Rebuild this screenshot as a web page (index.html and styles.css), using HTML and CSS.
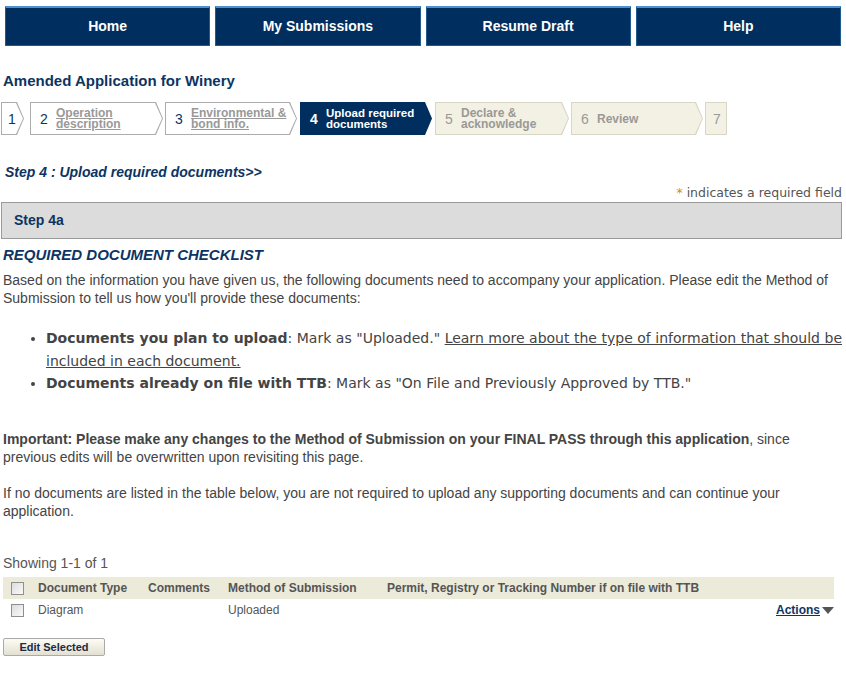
FILE: index.html
```html
<!DOCTYPE html>
<html>
<head>
    <title>Amended Application for Winery</title>
    <link rel="stylesheet" href="styles.css">
</head>
<body>
    <div class="nav">
        <a class="nav-btn" href="#">Home</a>
        <a class="nav-btn" href="#">My Submissions</a>
        <a class="nav-btn" href="#">Resume Draft</a>
        <a class="nav-btn" href="#">Help</a>
    </div>

    <div class="page">
        <h1 class="app-title">Amended Application for Winery</h1>

        <div class="stepper">
            <div class="step done s1"><div class="step-in"><span class="num">1</span></div></div>
            <div class="step done s2"><div class="step-in"><span class="num">2</span><a class="label" href="#">Operation<br>description</a></div></div>
            <div class="step done s3"><div class="step-in"><span class="num">3</span><a class="label" href="#">Environmental &amp;<br>bond info.</a></div></div>
            <div class="step active s4"><div class="step-in"><span class="num">4</span><span class="label">Upload required<br>documents</span></div></div>
            <div class="step todo s5"><div class="step-in"><span class="num">5</span><span class="label">Declare &amp;<br>acknowledge</span></div></div>
            <div class="step todo s6"><div class="step-in"><span class="num">6</span><span class="label">Review</span></div></div>
            <div class="step todo s7"><div class="step-in"><span class="num">7</span></div></div>
        </div>

        <h2 class="step-heading">Step 4 : Upload required documents&gt;&gt;</h2>

        <div class="required-note"><span class="star">*</span> indicates a required field</div>

        <div class="section-bar">Step 4a</div>

        <h3 class="checklist-title">REQUIRED DOCUMENT CHECKLIST</h3>
        <p class="text">Based on the information you have given us, the following documents need to accompany your application. Please edit the Method of Submission to tell us how you'll provide these documents:</p>

        <ul class="doc-list">
            <li><b>Documents you plan to upload</b>: Mark as "Uploaded." <a href="#">Learn more about the type of information that should be included in each document.</a></li>
            <li><b>Documents already on file with TTB</b>: Mark as "On File and Previously Approved by TTB."</li>
        </ul>

        <p class="text important"><b>Important: Please make any changes to the Method of Submission on your FINAL PASS through this application</b>, since previous edits will be overwritten upon revisiting this page.</p>
        <p class="text">If no documents are listed in the table below, you are not required to upload any supporting documents and can continue your application.</p>

        <div class="showing">Showing 1-1 of 1</div>

        <table class="docs">
            <thead>
                <tr>
                    <th class="col-check"><span class="checkbox"></span></th>
                    <th class="col-type">Document Type</th>
                    <th class="col-comments">Comments</th>
                    <th class="col-method">Method of Submission</th>
                    <th class="col-permit">Permit, Registry or Tracking Number if on file with TTB</th>
                    <th class="col-actions"></th>
                </tr>
            </thead>
            <tbody>
                <tr>
                    <td class="col-check"><span class="checkbox"></span></td>
                    <td>Diagram</td>
                    <td></td>
                    <td>Uploaded</td>
                    <td></td>
                    <td class="col-actions"><a href="#" class="actions">Actions</a><span class="caret"></span></td>
                </tr>
            </tbody>
        </table>

        <button class="edit-btn">Edit Selected</button>
    </div>
</body>
</html>
```

FILE: styles.css
```css
body {
    margin: 0;
    font-family: "Liberation Sans", Arial, sans-serif;
    font-size: 14px;
    color: #444;
    background: #fff;
}

/* top navigation */
.nav {
    display: flex;
    gap: 5px;
    padding: 6px 5px 0 5px;
}

.nav-btn {
    flex: 1;
    height: 37px;
    line-height: 36px;
    background: #002f5f;
    border-top: 2px solid #4d8fcf;
    border-bottom: 1px solid #1f5b8c;
    border-left: 1px solid #1f5b8c;
    border-right: 1px solid #1f5b8c;
    color: #fff;
    font-weight: bold;
    font-size: 14px;
    text-align: center;
    text-decoration: none;
}

.page {
    padding: 0 4px 0 3px;
}

.app-title {
    margin: 25px 0 0 0;
    font-size: 15px;
    line-height: 20px;
    color: #0d3463;
}

/* stepper */
.stepper {
    display: flex;
    gap: 2px;
    margin: 11px 0 0 -2px;
    height: 33px;
}

.step {
    height: 33px;
    background: #acacac;
    clip-path: polygon(0 0, calc(100% - 7px) 0, 100% 50%, calc(100% - 7px) 100%, 0 100%);
}

.step-in {
    height: 31px;
    margin: 1px;
    background: #fff;
    clip-path: polygon(0 0, calc(100% - 7px) 0, 100% 50%, calc(100% - 7px) 100%, 0 100%);
    display: flex;
    align-items: center;
    padding-left: 9px;
    box-sizing: border-box;
}

.s1 { width: 23px; margin-right: 4px; }
.s1 .step-in { padding-left: 6px; }
.s2 { width: 133px; }
.s3 { width: 132px; }
.s4 { width: 132px; margin-left: 1px; }
.s5 { width: 134px; margin-left: 1px; }
.s6 { width: 132px; }
.s7 { width: 22px; clip-path: none; }
.s7 .step-in { clip-path: none; padding-left: 7px; }

.step .num {
    font-size: 14px;
    color: #0d3463;
    width: 16px;
    flex: none;
}

.step .label {
    font-size: 12px;
    font-weight: bold;
    line-height: 11px;
    color: #999;
    padding-top: 1px;
}

.step.active { background: #002f5f; }
.step.active .step-in { background: #002f5f; }
.step.active .num { color: #fff; font-weight: bold; }
.step.active .label { color: #fff; font-size: 11.5px; }

.step.todo { background: #d9d6c6; }
.step.todo .step-in { background: #f3f1e3; }
.step.todo .num { color: #999; }
.step.todo .label { color: #999; }

.step-heading {
    margin: 28px 0 0 2px;
    font-size: 14px;
    font-style: italic;
    line-height: 18px;
    color: #0d3463;
}

.required-note {
    text-align: right;
    font-family: "DejaVu Sans", Verdana, sans-serif;
    font-size: 12.5px;
    line-height: 18px;
    margin: 3px 0 0 0;
    color: #555;
}
.required-note .star { color: #e08a00; }

.section-bar {
    margin: 0 0 0 -2px;
    height: 35px;
    line-height: 35px;
    padding-left: 12px;
    background: #dcdcdc;
    border: 1px solid #9a9a9a;
    font-size: 14px;
    font-weight: bold;
    color: #0d3463;
}

.checklist-title {
    margin: 7px 0 0 0;
    font-size: 15px;
    font-style: italic;
    line-height: 18px;
    color: #0d3463;
}

.text {
    margin: 7px 0 0 0;
    line-height: 18px;
}

.doc-list {
    margin: 20px 0 0 0;
    padding-left: 43px;
    font-family: "DejaVu Sans", Verdana, sans-serif;
    font-size: 14px;
    line-height: 22.5px;
    text-align: justify;
}
.doc-list a { color: #444; }

.text.important { margin-top: 35px; }
.text.important + .text { margin-top: 18px; }

.showing {
    margin-top: 34px;
    line-height: 18px;
    color: #555;
}

.docs {
    margin-top: 5px;
    width: 831px;
    border-collapse: collapse;
    font-size: 12px;
    color: #555;
}

.docs th {
    background: #ecead9;
    height: 22px;
    padding: 0;
    text-align: left;
    font-weight: bold;
}

.docs td {
    height: 23px;
    padding: 0;
}

.col-check { width: 27px; padding-left: 8px !important; }
.col-type { width: 110px; }
.col-comments { width: 80px; }
.col-method { width: 159px; }
.col-actions { text-align: right; }

.checkbox {
    display: inline-block;
    width: 11px;
    height: 11px;
    border: 1px solid #8f8f8f;
    background: linear-gradient(135deg, #dcdcdc, #fafafa);
    vertical-align: middle;
}

.actions {
    color: #0d3463;
    font-weight: bold;
}

.caret {
    display: inline-block;
    width: 0;
    height: 0;
    margin-left: 2px;
    border-left: 6px solid transparent;
    border-right: 6px solid transparent;
    border-top: 7px solid #555;
    vertical-align: middle;
}

.edit-btn {
    margin-top: 16px;
    width: 102px;
    height: 18px;
    padding: 0;
    border: 1px solid #aaa;
    border-radius: 2px;
    background: linear-gradient(#fdfcf4, #e3e0d2);
    font-family: "Liberation Sans", Arial, sans-serif;
    font-size: 11px;
    font-weight: bold;
    color: #1b2b44;
}
```
